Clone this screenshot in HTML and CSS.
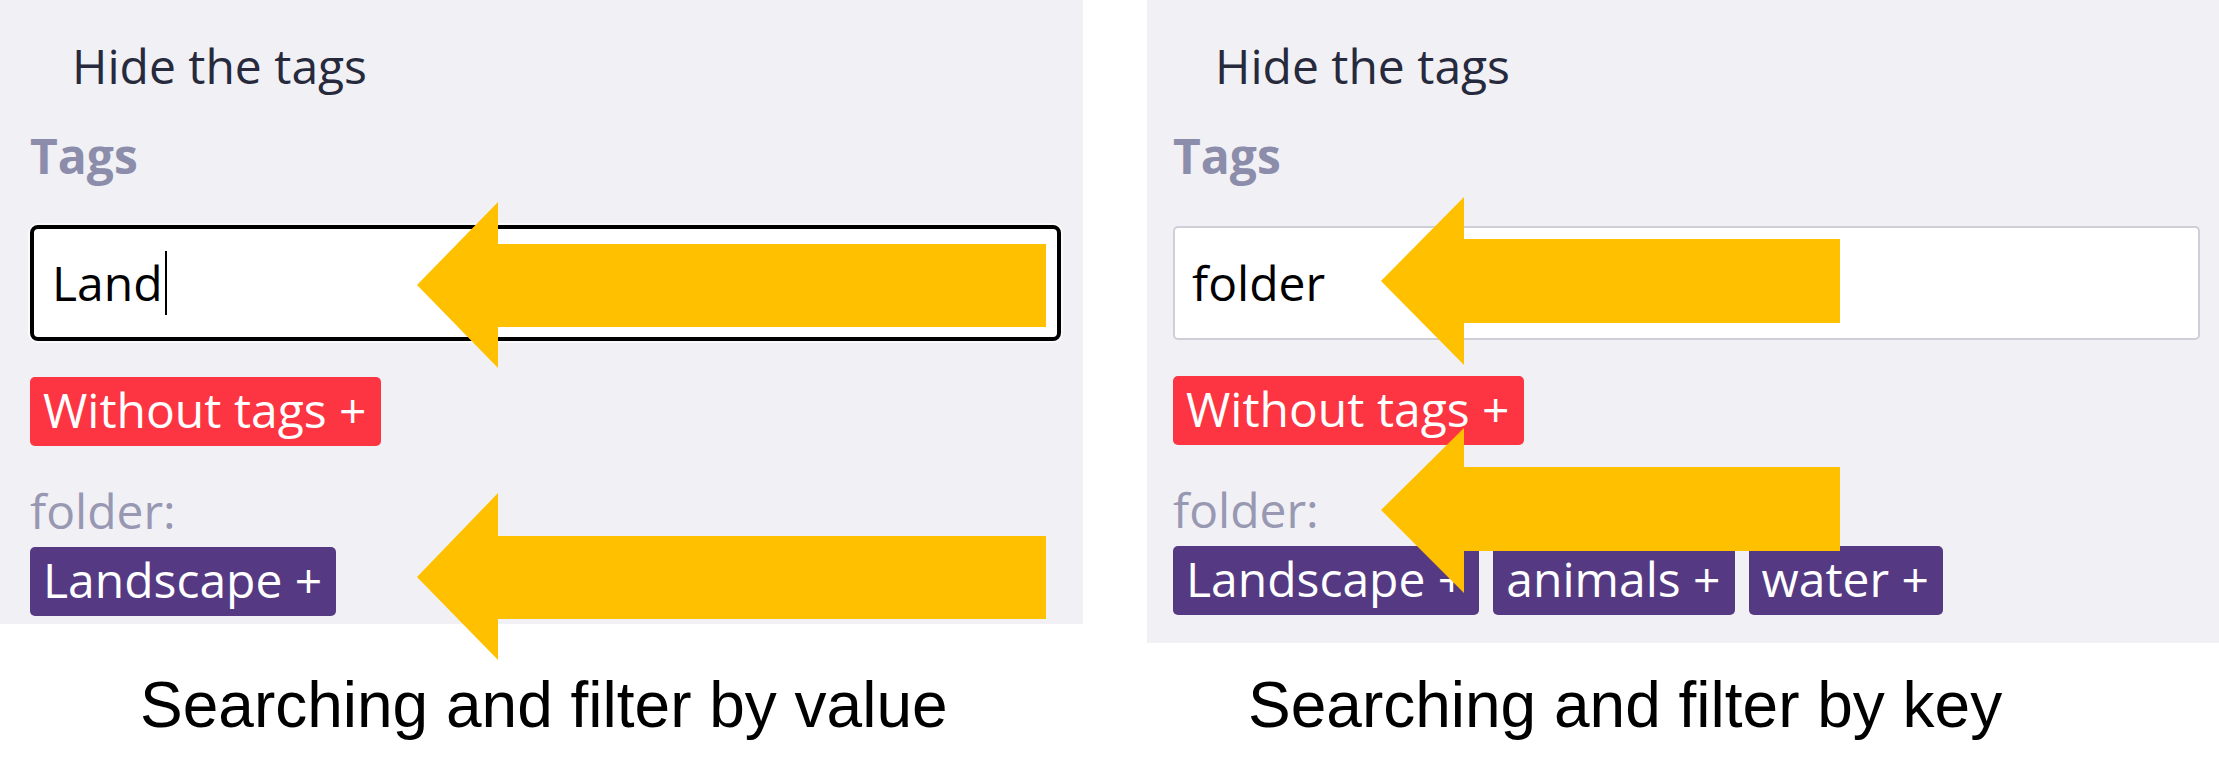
FILE: index.html
```html
<!DOCTYPE html>
<html lang="en">
<head>
    <meta charset="UTF-8">
    <meta name="viewport" content="width=device-width, initial-scale=1.0">
    <title>Tag search - key and value</title>
    <link rel="stylesheet" href="styles.css">
</head>
<body>

    <div class="board">

        <div class="shot shot-left">
            <div class="hide">Hide the tags</div>
            <div class="label">Tags</div>
            <div class="search"><span>Land</span><span class="caret"></span></div>
            <div class="tags tags-none">
                <span class="tag tag-none">Without tags +</span>
            </div>
            <div class="key">folder:</div>
            <div class="tags tags-folder">
                <span class="tag tag-folder">Landscape +</span>
            </div>
            <svg class="arrows" width="1083" height="623">
                <polygon points="417,285 498,202 498,244 1046,244 1046,327 498,327 498,368"/>
                <polygon points="417,577 498,493 498,536 1046,536 1046,619 498,619 498,660"/>
            </svg>
        </div>

        <div class="shot shot-right">
            <div class="hide">Hide the tags</div>
            <div class="label">Tags</div>
            <div class="search idle"><span>folder</span></div>
            <div class="tags tags-none">
                <span class="tag tag-none">Without tags +</span>
            </div>
            <div class="key">folder:</div>
            <div class="tags tags-folder">
                <span class="tag tag-folder">Landscape +</span>
                <span class="tag tag-folder">animals +</span>
                <span class="tag tag-folder">water +</span>
            </div>
            <svg class="arrows" width="1072" height="643">
                <polygon points="234,281 317,197 317,239 693,239 693,323 317,323 317,365"/>
                <polygon points="234,510 317,428 317,467 693,467 693,551 317,551 317,593"/>
            </svg>
        </div>

        <p class="caption caption-left">Searching and filter by value</p>
        <p class="caption caption-right">Searching and filter by key</p>

    </div>

</body>
</html>
```

FILE: styles.css
```css
body {
    margin: 0;
    background: #fff;
    font-family: "Open Sans", sans-serif;
}
.board {
    display: grid;
    grid-template-columns: 1083px 1072px;
    grid-template-rows: 643px auto;
    column-gap: 64px;
}
.shot {
    position: relative;
    background: #f0f0f5;
    padding: 37px 22px 8px 30px;
    font-size: 48px;
    line-height: 58px;
    color: #262a3c;
}
.shot-left {
    align-self: start;
}
.shot-right {
    padding-left: 26px;
    padding-right: 19px;
}
.hide {
    padding-left: 42px;
}
.label {
    margin-top: 32px;
    font-weight: bold;
    color: #8c8cab;
}
.search {
    margin-top: 40px;
    height: 116px;
    box-sizing: border-box;
    display: flex;
    align-items: center;
    padding: 0 18px;
    background: #fff;
    border: 4px solid #000;
    border-radius: 8px;
    box-shadow: 0 0 0 2px #fafafc;
    color: #000;
}
.search.idle {
    height: 114px;
    margin-top: 41px;
    border: 2px solid #cfcfd8;
    border-radius: 5px;
    box-shadow: none;
    padding: 0 17px;
}
.caret {
    width: 2px;
    height: 64px;
    margin-left: 2px;
    background: #000;
}
.tags {
    display: flex;
    gap: 14px;
}
.tags-none {
    margin-top: 36px;
}
.tags-folder {
    margin-top: 7px;
}
.key {
    margin-top: 36px;
    color: #9898b2;
}
.tag {
    padding: 4px 14px 7px 13px;
    border-radius: 5px;
    color: #fff;
}
.tag-none {
    background: #fd3441;
}
.tag-folder {
    background: #553a83;
}
.arrows {
    position: absolute;
    top: 0;
    left: 0;
    overflow: visible;
    pointer-events: none;
}
.arrows polygon {
    fill: #ffc000;
}
.caption {
    margin: 25px 0 0;
    font-family: "Liberation Sans", Arial, sans-serif;
    font-size: 64px;
    line-height: 74px;
    color: #000;
}
.caption-left {
    padding-left: 140px;
}
.caption-right {
    padding-left: 101px;
}
```
